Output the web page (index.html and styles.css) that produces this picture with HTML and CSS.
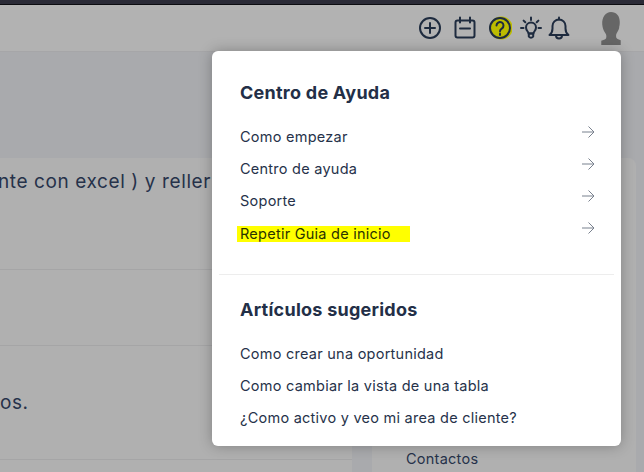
FILE: index.html
```html
<!DOCTYPE html>
<html lang="es">
<head>
    <meta charset="UTF-8">
    <title>Centro de Ayuda</title>
    <link rel="stylesheet" href="styles.css">
</head>
<body>
    <div class="top-strip"></div>

    <header class="header">
        <svg class="icon icon-spaced" viewBox="0 0 24 24">
            <circle cx="12" cy="12" r="10"/>
            <path d="M12 7v10M7 12h10"/>
        </svg>
        <svg class="icon icon-spaced" viewBox="0 0 24 24">
            <rect x="2.500" y="4.500" width="19" height="17" rx="2"/>
            <path d="M7 1.500v5M17 1.500v5M7 12.500h10"/>
        </svg>
        <div class="help-icon">
            <svg class="icon" viewBox="0 0 24 24">
                <circle cx="12" cy="12" r="10"/>
                <path d="M8.500 9.500a3.500 3.500 0 1 1 5.500 2.900c-1.300.8-2 1.500-2 2.800"/>
                <path d="M12 17.500v1.500"/>
            </svg>
        </div>
        <svg class="icon" viewBox="0 0 24 24">
            <path d="M12 1.500v2.500M4.600 4.600l1.700 1.700M19.400 4.600l-1.700 1.700M2 12h2.500M19.500 12H22"/>
            <path d="M9.500 17.500c0-2-2.500-2.800-2.500-6a5 5 0 0 1 10 0c0 3.200-2.500 4-2.500 6z"/>
            <path d="M9.800 20.500c.5 1.500 3.900 1.500 4.400 0v-3h-4.400z"/>
        </svg>
        <svg class="icon" viewBox="0 0 24 24">
            <path d="M2.500 19c2-1.500 3-3 3-6.500V10a6.500 6.500 0 0 1 13 0v2.500c0 3.500 1 5 3 6.500z"/>
            <path d="M12 1.500v2"/>
            <path d="M9 19.500a3 3 0 0 0 6 0"/>
        </svg>
        <svg class="avatar" viewBox="0 0 26 36">
            <path d="M13 1c5.500 0 9 4 9 10 0 2 0 3.500-.5 5 0 2.500-1 4.500-2.500 6.500-.8 1-1 3-.5 5 1 1.500 2.500 2 4.500 2.500V35H3v-4.500c2-.5 4-1 5-2.500.5-2 .2-4-.8-5.200C5 20 4.500 17.500 4 14 3.500 6 7.500 1 13 1z"/>
        </svg>
    </header>

    <main class="page">
        <section class="content">
            <div class="content-band"></div>
            <div class="content-card">
                <div class="row row-intro">
                    <p class="row-text row-text-cut">nte con excel ) y reller</p>
                </div>
                <div class="row row-empty"></div>
                <div class="row row-last">
                    <p class="row-text row-text-end">os.</p>
                </div>
            </div>
        </section>
        <aside class="side-card">
            <a class="side-link" href="#">Contactos</a>
        </aside>
    </main>

    <div class="popover">
        <div class="popover-block">
            <h2>Centro de Ayuda</h2>
            <ul class="help-list">
                <li><a href="#">Como empezar</a><svg class="arrow" viewBox="0 0 14 14"><path d="M1 7h12M7.500 1.500 13 7l-5.500 5.500"/></svg></li>
                <li><a href="#">Centro de ayuda</a><svg class="arrow" viewBox="0 0 14 14"><path d="M1 7h12M7.500 1.500 13 7l-5.500 5.500"/></svg></li>
                <li><a href="#">Soporte</a><svg class="arrow" viewBox="0 0 14 14"><path d="M1 7h12M7.500 1.500 13 7l-5.500 5.500"/></svg></li>
                <li><a class="marked" href="#">Repetir Guia de inicio</a><svg class="arrow" viewBox="0 0 14 14"><path d="M1 7h12M7.500 1.500 13 7l-5.500 5.500"/></svg></li>
            </ul>
        </div>
        <div class="popover-line"></div>
        <div class="popover-block popover-block-low">
            <h2>Artículos sugeridos</h2>
            <ul class="help-list">
                <li><a href="#">Como crear una oportunidad</a></li>
                <li><a href="#">Como cambiar la vista de una tabla</a></li>
                <li><a href="#">¿Como activo y veo mi area de cliente?</a></li>
            </ul>
        </div>
    </div>
</body>
</html>
```

FILE: styles.css
```css
* {
    margin: 0;
    padding: 0;
    box-sizing: border-box;
}

body {
    width: 644px;
    height: 472px;
    overflow: hidden;
    position: relative;
    display: flex;
    flex-direction: column;
    font-family: "Inter", "Liberation Sans", sans-serif;
    color: #26324a;
    background-color: #a9aaad;
}

a {
    color: inherit;
    text-decoration: none;
}

ul {
    list-style: none;
}

.top-strip {
    height: 5px;
    flex-shrink: 0;
    background-color: #2a2a36;
    border-bottom: 1px solid #0c0c10;
}

.header {
    height: 47px;
    flex-shrink: 0;
    display: flex;
    justify-content: flex-end;
    align-items: center;
    gap: 4px;
    padding: 0 20px 0 0;
    background-color: #b2b2b2;
    border-bottom: 1px solid #a6a6a8;
}

.icon {
    display: block;
    width: 24px;
    height: 24px;
    fill: none;
    stroke: #1e2b3f;
    stroke-width: 2;
    stroke-linecap: round;
    stroke-linejoin: round;
}

.icon-spaced {
    margin-right: 7px;
}

.help-icon {
    margin-right: 3px;
    background: radial-gradient(circle at 55% 50%, #bcbc00 0 10px, #bcbc00 11px, transparent 12px);
}

.avatar {
    display: block;
    width: 26px;
    height: 35px;
    margin-left: 23px;
    fill: #666666;
}

.page {
    flex: 1;
    display: flex;
    gap: 20px;
    min-height: 0;
}

.content {
    width: 352px;
    display: flex;
    flex-direction: column;
}

.content-band {
    height: 106px;
    flex-shrink: 0;
}

.content-card {
    flex: 1;
    background-color: #b0b0b0;
}

.row {
    border-bottom: 1px solid #a5a5a6;
    overflow: hidden;
}

.row-intro {
    height: 112px;
    padding-top: 12px;
}

.row-empty {
    height: 76px;
}

.row-last {
    height: 114px;
    padding-top: 45px;
}

.row-text {
    font-size: 19px;
    line-height: 24px;
    letter-spacing: 0.6px;
    white-space: nowrap;
}

.row-text-cut {
    margin-left: -2px;
}

.side-card {
    width: 264px;
    margin-top: 106px;
    padding: 290px 0 0 34px;
    background-color: #b0b0b0;
    border-radius: 8px 8px 0 0;
}

.side-link {
    font-size: 14.5px;
    line-height: 20px;
    letter-spacing: 0.25px;
}

.popover {
    position: absolute;
    left: 212px;
    top: 51px;
    width: 409px;
    height: 395px;
    padding: 0 7px;
    background-color: #fff;
    border-radius: 6px;
    box-shadow: 0 0 14px rgba(0, 0, 0, 0.28);
}

.popover-block {
    padding: 30px 19px 0 21px;
}

.popover-block-low {
    padding-top: 23px;
}

.popover h2 {
    font-size: 18px;
    line-height: 24px;
    font-weight: 700;
    letter-spacing: 0.25px;
    color: #232f47;
}

.help-list {
    margin-top: 15px;
}

.help-list li {
    height: 32px;
    display: flex;
    justify-content: space-between;
    align-items: center;
    font-size: 14.5px;
    letter-spacing: 0.25px;
}

.marked {
    width: 173px;
    height: 16px;
    margin-top: 3px;
    margin-left: -3px;
    padding-left: 3px;
    line-height: 16px;
    background-color: #ffff00;
    color: #2a3300;
}

.arrow {
    width: 14px;
    height: 14px;
    margin-top: -8px;
    fill: none;
    stroke: #79818e;
    stroke-width: 1;
}

.popover-line {
    height: 1px;
    margin-top: 26px;
    background-color: #ededed;
}
```
